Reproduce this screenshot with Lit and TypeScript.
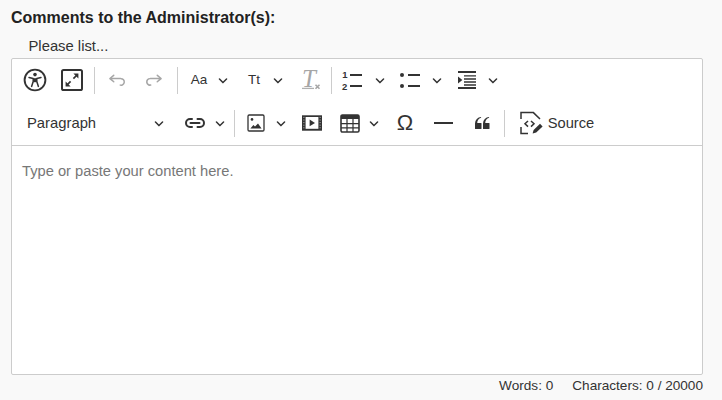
import { LitElement, html, css, svg, nothing } from "lit";
import { customElement } from "lit/decorators.js";

const DARK = "#333";
const chevron = html`<svg class="chev" width="10" height="10" viewBox="0 0 10 10"><path fill="${DARK}" d="M.941 4.523a.75.75 0 1 1 1.06-1.06l3.006 3.005 3.005-3.005a.75.75 0 1 1 1.06 1.06l-3.549 3.55a.75.75 0 0 1-1.168-.13L.941 4.523z"/></svg>`;

const icon = (w: number, h: number, body: unknown) =>
  html`<svg width="${w}" height="${h}" viewBox="0 0 ${w} ${h}" fill="none">${body}</svg>`;

const icons: Record<string, unknown> = {
  chev: chevron,
  access: icon(24, 24, svg`
    <circle cx="12" cy="12" r="10.4" stroke="${DARK}" stroke-width="1.9"/>
    <circle cx="12" cy="6.6" r="1.8" fill="${DARK}"/>
    <path d="M6 9.4 L10.2 10.4 V13.6 L8.6 18.4 M18 9.4 L13.8 10.4 V13.6 L15.4 18.4" stroke="${DARK}" stroke-width="1.5" stroke-linecap="round" stroke-linejoin="round"/>
    <rect x="10.2" y="10.2" width="3.6" height="4" fill="${DARK}"/>`),
  full: icon(24, 24, svg`
    <rect x="2" y="2" width="20" height="20" rx="1.6" stroke="${DARK}" stroke-width="2"/>
    <path d="M7.5 16.5 L10.6 13.4 M13.4 10.6 L16.5 7.5" stroke="${DARK}" stroke-width="1.7"/>
    <path d="M13.4 5.6 H18.4 V10.6 Z M5.6 13.4 V18.4 H10.6 Z" fill="${DARK}"/>`),
  undo: icon(20, 20, svg`<path fill="#a6a6a6" d="m5.042 9.367 2.189 1.837a.75.75 0 0 1-.965 1.149l-3.788-3.18a.747.747 0 0 1-.21-.284.75.75 0 0 1 .17-.945L6.23 4.762a.75.75 0 1 1 .964 1.15L4.863 7.866h8.917A.75.75 0 0 1 14 7.9a4 4 0 1 1-1.477 7.718l.344-1.489a2.5 2.5 0 1 0 1.094-4.73l.008-.032H5.042z"/>`),
  redo: icon(20, 20, svg`<path fill="#a6a6a6" d="m14.958 9.367-2.189 1.837a.75.75 0 0 0 .965 1.149l3.788-3.18a.747.747 0 0 0 .21-.284.75.75 0 0 0-.17-.945L13.77 4.762a.75.75 0 1 0-.964 1.15l2.331 1.955H6.22A.75.75 0 0 0 6 7.9a4 4 0 1 0 1.477 7.718l-.344-1.489A2.5 2.5 0 1 1 6.039 9.34l-.008-.032h8.927z"/>`),
  aa: html`<span class="glyph aa">Aa</span>`,
  tt: html`<span class="glyph tt">Tt</span>`,
  clear: icon(24, 24, svg`
    <text x="1" y="19" class="tx">T</text>
    <path d="M1 20.4 H13" stroke="#b0b0b0" stroke-width="1.3"/>
    <path d="M14.5 16.8 L18.5 20.8 M18.5 16.8 L14.5 20.8" stroke="#a6a6a6" stroke-width="1.6"/>`),
  ol: icon(24, 24, svg`
    <text x="3.2" y="10.4" class="num">1</text>
    <text x="3" y="22.4" class="num">2</text>
    <path d="M11 7 H23 M11 18 H23" stroke="${DARK}" stroke-width="1.8"/>`),
  ul: icon(24, 24, svg`
    <circle cx="5" cy="7" r="2" fill="${DARK}"/>
    <circle cx="5" cy="18" r="2" fill="${DARK}"/>
    <path d="M11 7 H23 M11 18 H23" stroke="${DARK}" stroke-width="1.8"/>`),
  indent: icon(20, 20, svg`
    <path d="M1 2 H19 M1 18 H19" stroke="${DARK}" stroke-width="2"/>
    <path d="M7 5.8 H19 M7 9 H19 M7 12 H19 M7 15 H19" stroke="${DARK}" stroke-width="1.3"/>
    <path d="M1 6.4 L5.4 10 L1 13.6 Z" fill="${DARK}"/>`),
  link: icon(22, 12, svg`
    <path d="M8 2 H6 a4 4 0 0 0 0 8 H8 M13.5 2 H16 a4 4 0 0 1 0 8 H13.5 M6.5 6 H15.5" stroke="${DARK}" stroke-width="2" stroke-linecap="round"/>`),
  image: icon(18, 18, svg`
    <rect x="1" y="1" width="16" height="16" rx="1.2" stroke="${DARK}" stroke-width="1.3"/>
    <circle cx="5" cy="5.4" r="1.3" fill="${DARK}"/>
    <path d="M3.4 14.4 L6.4 11 L8 12.4 L11 9.6 L14.6 14.4 Z" fill="${DARK}"/>`),
  media: icon(20, 16, svg`
    <rect width="20" height="15.4" y=".3" fill="${DARK}"/>
    <rect x="3.6" y="2" width="12.8" height="11.8" fill="#fff"/>
    <path d="M7.6 4.6 L13 7.9 L7.6 11.2 Z" fill="${DARK}"/>
    <path d="M1 2.4 H2.6 M1 5 H2.6 M1 7.6 H2.6 M1 10.2 H2.6 M1 12.8 H2.6 M17.4 2.4 H19 M17.4 5 H19 M17.4 7.6 H19 M17.4 10.2 H19 M17.4 12.8 H19" stroke="#888" stroke-width="1"/>`),
  table: icon(20, 19, svg`
    <rect x="1" y="1" width="18" height="17" rx="1.4" stroke="${DARK}" stroke-width="1.6"/>
    <rect x="1" y="1" width="18" height="4" fill="${DARK}"/>
    <path d="M1 9.6 H19 M1 13.8 H19 M7 5 V18 M13 5 V18" stroke="${DARK}" stroke-width="1.2"/>`),
  omega: html`<span class="glyph omega">Ω</span>`,
  hr: icon(20, 4, svg`<rect y="1" width="19" height="2" fill="${DARK}"/>`),
  quote: icon(20, 20, svg`<path fill="${DARK}" d="M3 10.423a6.5 6.5 0 0 1 6.056-6.408l.038.67C6.448 5.423 5.354 7.663 5.22 10H9c.552 0 .5.432.5.986v4.511c0 .554-.448.503-1 .503h-5c-.552 0-.5-.449-.5-1.003v-4.574zm8 0a6.5 6.5 0 0 1 6.056-6.408l.038.67c-2.646.739-3.74 2.979-3.873 5.315H17c.552 0 .5.432.5.986v4.511c0 .554-.448.503-1 .503h-5c-.552 0-.5-.449-.5-1.003v-4.574z"/>`),
  source: icon(24, 24, svg`
    <path d="M2 8 V1.6 H14.4 L21 8 M2 16 V22.4 H9" stroke="${DARK}" stroke-width="1.5"/>
    <path d="M9 10 L6 12.8 L9 15.6 M12 10 L15 12.8 L12 15.6" stroke="${DARK}" stroke-width="1.5"/>
    <path d="M13.6 22.6 L14.6 19 L21 12.8 L23.6 15.4 L17.2 21.6 Z" fill="${DARK}"/>`),
};

type Item = { k: string; c: number; w: number };
const item = (k: string, c: number, w = 24): Item => ({ k, c, w });

const row1: Item[] = [
  item("access", 34.5), item("full", 72), item("sep", 94.5, 1),
  item("undo", 117, 20), item("redo", 154, 20), item("sep", 177.5, 1),
  item("aa", 199, 20), item("chev", 223, 10), item("tt", 254, 20), item("chev", 278, 10),
  item("clear", 313), item("sep", 331.5, 1),
  item("ol", 351), item("chev", 379.5, 10), item("ul", 409), item("chev", 436.5, 10),
  item("indent", 467, 20), item("chev", 492.5, 10),
];
const row2: Item[] = [
  item("para", 88, 122), item("chev", 158.5, 10), item("link", 195, 22), item("chev", 220, 10),
  item("sep", 234.5, 1), item("image", 256, 18), item("chev", 280.5, 10), item("media", 312, 20),
  item("table", 349.5, 20), item("chev", 374, 10), item("omega", 405, 22), item("hr", 443.5, 20),
  item("quote", 482, 20), item("sep", 504.5, 1), item("source", 530.5),
  item("srclabel", 571, 46),
];

@customElement("app-root")
export class AppRoot extends LitElement {
  static styles = css`
    :host {
      display: block;
      width: 722px;
      height: 400px;
      background: #f9f9f9;
      font-family: "Liberation Sans", Arial, sans-serif;
      font-size: 14px;
      color: #333;
      box-sizing: border-box;
      padding: 9px 19px 0 11px;
      overflow: hidden;
    }
    svg { overflow: visible; }
    .title { font-weight: 700; font-size: 16px; line-height: 17px; color: #222; }
    .hint { font-size: 14.8px; line-height: 17px; margin: 12px 0 0 17.5px; height: 20px; color: #333; }
    .editor {
      height: 317px;
      box-sizing: border-box;
      background: #fff;
      border: 1px solid #ccc;
      border-radius: 2px;
      display: flex;
      flex-direction: column;
    }
    .toolbar { border-bottom: 1px solid #ccc; height: 87px; box-sizing: border-box; }
    .row { display: flex; align-items: center; height: 42px; }
    .row + .row { height: 44px; }
    .cell { display: flex; align-items: center; justify-content: center; flex: none; }
    .sep { height: 27px; background: #ccc; }
    .glyph { line-height: 20px; white-space: nowrap; }
    .aa, .tt { font-size: 13.5px; color: #333; }
    .omega { font-family: "Liberation Sans", sans-serif; font-size: 22px; line-height: 24px; }
    .para { font-size: 14.8px; color: #333; white-space: nowrap; justify-content: flex-start; }
    .srclabel { font-size: 14.7px; color: #333; white-space: nowrap; }
    .tx { font: italic 25px "Liberation Serif", serif; fill: #a6a6a6; }
    .num { font: 700 9.5px "Liberation Sans", sans-serif; fill: #333; }
    .content { padding: 16px 10px; color: #777; font-size: 14.7px; line-height: 18px; flex: 1; }
    .footer {
      display: flex;
      justify-content: flex-end;
      gap: 19px;
      margin-top: 3px;
      line-height: 16px;
      font-size: 13.6px;
      color: #333;
    }
  `;

  private renderRow(items: Item[]) {
    let right = 12;
    return html`<div class="row">
      ${items.map((it) => {
        const left = it.c - it.w / 2;
        const ml = left - right;
        right = left + it.w;
        const st = `width:${it.w}px;margin-left:${ml}px`;
        if (it.k === "sep") return html`<div class="cell sep" style=${st}></div>`;
        if (it.k === "para") return html`<div class="cell para" style=${st}>Paragraph</div>`;
        if (it.k === "srclabel") return html`<div class="cell srclabel" style=${st}>Source</div>`;
        return html`<div class="cell" style=${st}>${icons[it.k] ?? nothing}</div>`;
      })}
    </div>`;
  }

  render() {
    return html`
      <div class="title">Comments to the Administrator(s):</div>
      <div class="hint">Please list...</div>
      <div class="editor">
        <div class="toolbar">${this.renderRow(row1)}${this.renderRow(row2)}</div>
        <div class="content">Type or paste your content here.</div>
      </div>
      <div class="footer"><span>Words: 0</span><span>Characters: 0 / 20000</span></div>
    `;
  }
}
